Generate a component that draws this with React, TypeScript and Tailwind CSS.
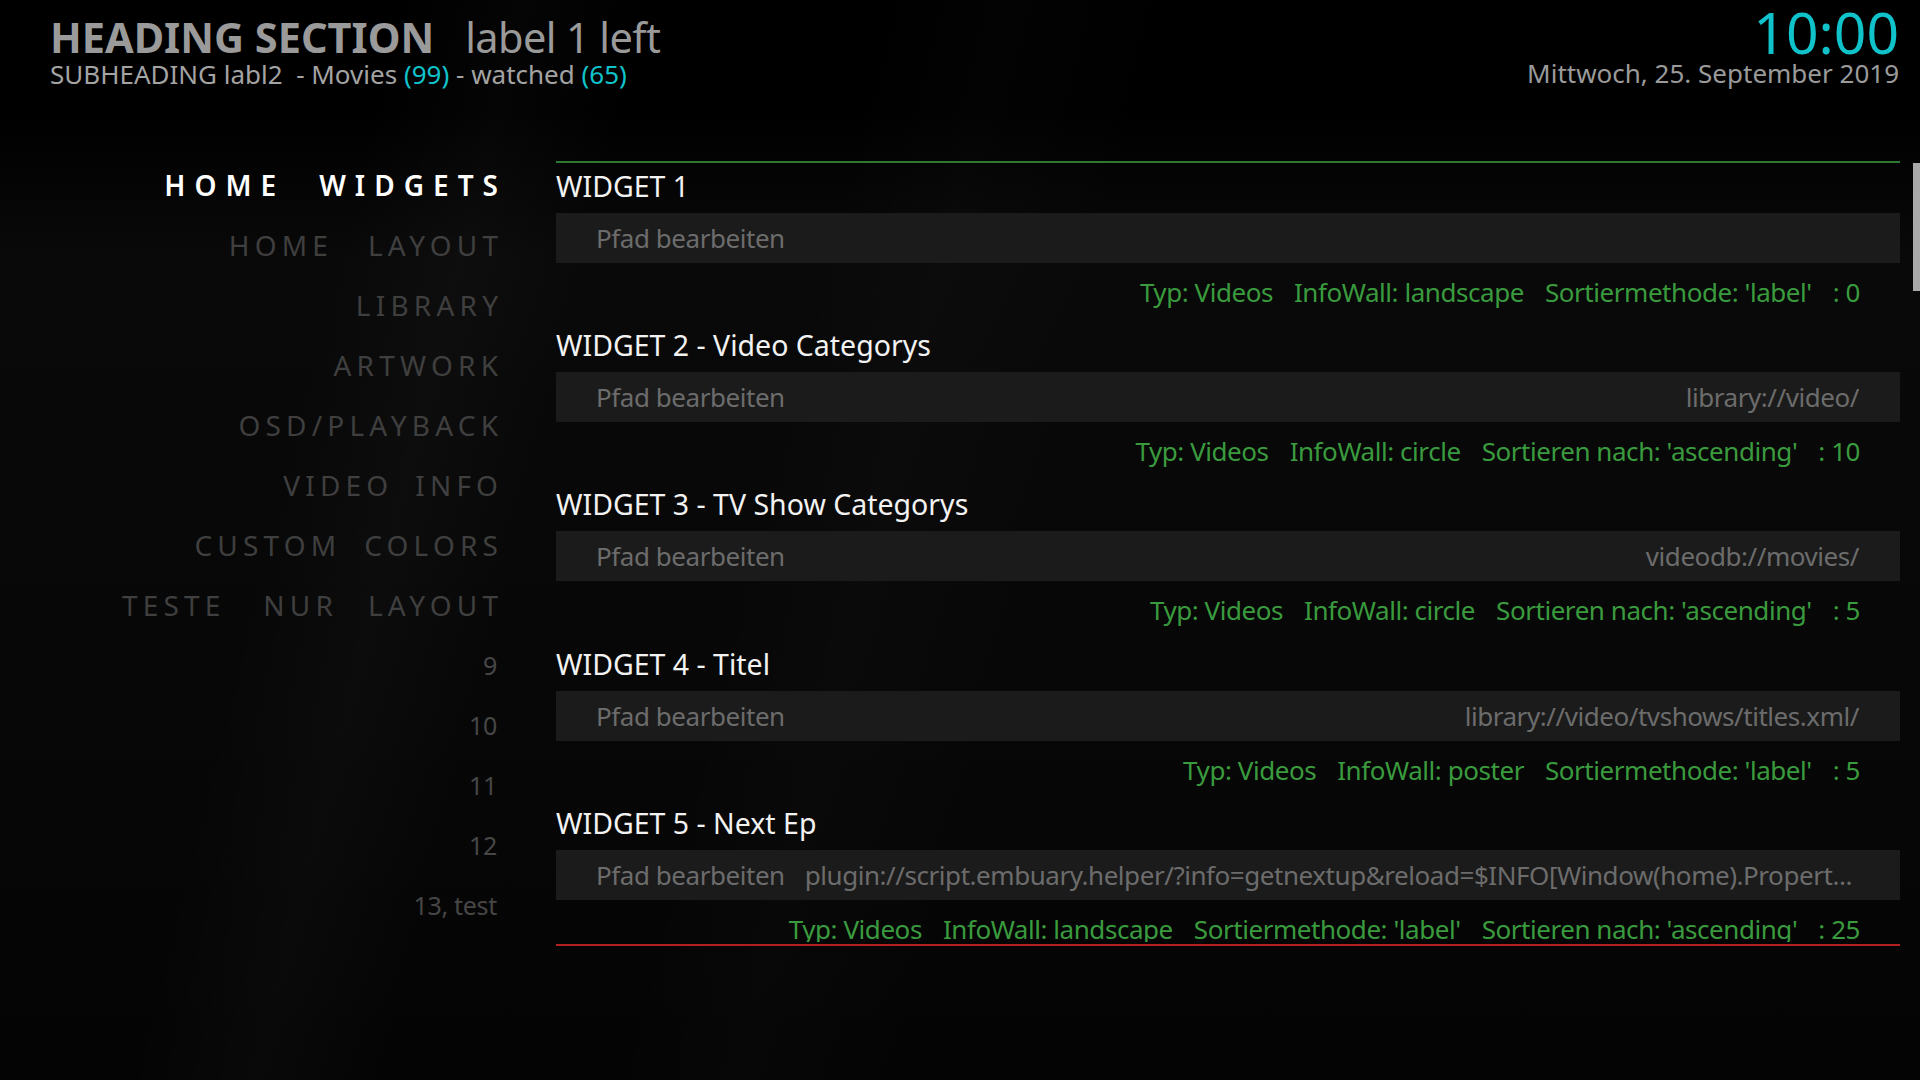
import React from 'react';

interface Widget {
  title: string;
  path: string;
  truncated?: boolean;
  info: string[];
}

const widgets: Widget[] = [
  { title: 'WIDGET 1', path: '', info: ['Typ: Videos', 'InfoWall: landscape', "Sortiermethode: 'label'", ': 0'] },
  { title: 'WIDGET 2 - Video Categorys', path: 'library://video/', info: ['Typ: Videos', 'InfoWall: circle', "Sortieren nach: 'ascending'", ': 10'] },
  { title: 'WIDGET 3 - TV Show Categorys', path: 'videodb://movies/', info: ['Typ: Videos', 'InfoWall: circle', "Sortieren nach: 'ascending'", ': 5'] },
  { title: 'WIDGET 4 - Titel', path: 'library://video/tvshows/titles.xml/', info: ['Typ: Videos', 'InfoWall: poster', "Sortiermethode: 'label'", ': 5'] },
  {
    title: 'WIDGET 5 - Next Ep',
    path: 'plugin://script.embuary.helper/?info=getnextup&reload=$INFO[Window(home).Propert...',
    truncated: true,
    info: ['Typ: Videos', 'InfoWall: landscape', "Sortiermethode: 'label'", "Sortieren nach: 'ascending'", ': 25'],
  },
];

// words of each menu entry, with the gap (px) that follows each word
const menuItems: { words: string[]; gaps: number[] }[] = [
  { words: ['HOME', 'WIDGETS'], gaps: [43] },
  { words: ['HOME', 'LAYOUT'], gaps: [40] },
  { words: ['LIBRARY'], gaps: [] },
  { words: ['ARTWORK'], gaps: [] },
  { words: ['OSD/PLAYBACK'], gaps: [] },
  { words: ['VIDEO', 'INFO'], gaps: [27] },
  { words: ['CUSTOM', 'COLORS'], gaps: [28] },
  { words: ['TESTE', 'NUR', 'LAYOUT'], gaps: [43, 35] },
];

const numberItems = ['9', '10', '11', '12', '13, test'];

const WidgetBlock: React.FC<{ widget: Widget }> = ({ widget }) => (
  <div className="h-[159.2px] shrink-0">
    <div className="leading-[47px] text-[28.5px] text-[#f2f2f2] whitespace-nowrap">{widget.title}</div>
    <div className="mt-[3px] h-[50px] bg-[#1b1b1b] flex items-center gap-[20px] pl-[40px] pr-[41px] text-[26px] tracking-[-0.45px] text-[#6c6c6c] leading-[50px]">
      <span className="shrink-0">Pfad bearbeiten</span>
      <span className={`flex-1 min-w-0 whitespace-nowrap overflow-hidden ${widget.truncated ? 'text-left' : 'text-right'}`}>
        {widget.path}
      </span>
    </div>
    <div className="flex justify-end gap-[21px] pr-[40px] leading-[58px] text-[26px] tracking-[-0.45px] text-[#3a9b3e] whitespace-nowrap">
      {widget.info.map((t, i) => (
        <span key={i}>{t}</span>
      ))}
    </div>
  </div>
);

export default function App() {
  return (
    <div className="w-[1920px] h-[1080px] overflow-hidden font-['Noto_Sans',sans-serif] bg-[linear-gradient(104deg,transparent_18%,rgba(255,255,255,0.018)_24%,transparent_30%,transparent_40%,rgba(255,255,255,0.012)_46%,transparent_54%),linear-gradient(180deg,#000_0px,#000_110px,#090909_260px,#070707_700px,#040404_100%)]">
      {/* header */}
      <div className="h-[155px] flex justify-between">
        <div className="pl-[50px] pt-[15px]">
          <div className="flex items-baseline h-[44px] leading-[44px] text-[41.5px] text-[#9a9a9a] whitespace-nowrap">
            <span className="font-bold">HEADING SECTION</span>
            <span className="ml-[31px] tracking-[-0.6px]">label 1 left</span>
          </div>
          <div className="leading-[30px] text-[26px] text-[#a3a3a3] whitespace-nowrap">
            SUBHEADING labl2&nbsp; - Movies <span className="text-[#10c3cb]">(99)</span> - watched{' '}
            <span className="text-[#10c3cb]">(65)</span>
          </div>
        </div>
        <div className="pr-[21px] text-right">
          <div className="leading-[64px] text-[57px] text-[#10c3cb]">10:00</div>
          <div className="mt-[-6px] leading-[30px] text-[26px] text-[#9a9a9a] whitespace-nowrap">Mittwoch, 25. September 2019</div>
        </div>
      </div>

      {/* main */}
      <div className="flex">
        <div className="w-[500px] shrink-0 flex flex-col items-end">
          {menuItems.map((item, i) => {
            const active = i === 0;
            const ls = active ? 9 : 5.2;
            return (
              <div
                key={i}
                className={`h-[60px] leading-[60px] text-[28px] flex whitespace-nowrap pr-[2px] ${
                  active ? 'font-semibold text-white' : 'text-[#3f3f3f]'
                }`}
              >
                {item.words.map((w, j) => (
                  <span
                    key={j}
                    className={active ? 'tracking-[9px]' : 'tracking-[5.2px]'}
                    style={{ marginRight: j < item.gaps.length ? item.gaps[j] - ls : -ls }}
                  >
                    {w}
                  </span>
                ))}
              </div>
            );
          })}
          {numberItems.map(n => (
            <div key={n} className="h-[60px] leading-[60px] text-[25px] tracking-[-0.3px] text-[#464646] pr-[3px] whitespace-nowrap">
              {n}
            </div>
          ))}
        </div>

        <div className="ml-[56px] w-[1344px] shrink-0 mt-[6px]">
          <div className="h-[2px] bg-[#2c7a2f]" />
          <div className="h-[779px] overflow-hidden flex flex-col">
            {widgets.map(w => (
              <WidgetBlock key={w.title} widget={w} />
            ))}
          </div>
          <div className="mt-[2px] h-[2px] bg-[#b3201f]" />
        </div>

        <div className="ml-[13px] mt-[8px] w-[7px] h-[128px] bg-[#a9a9a9]" />
      </div>
    </div>
  );
}
